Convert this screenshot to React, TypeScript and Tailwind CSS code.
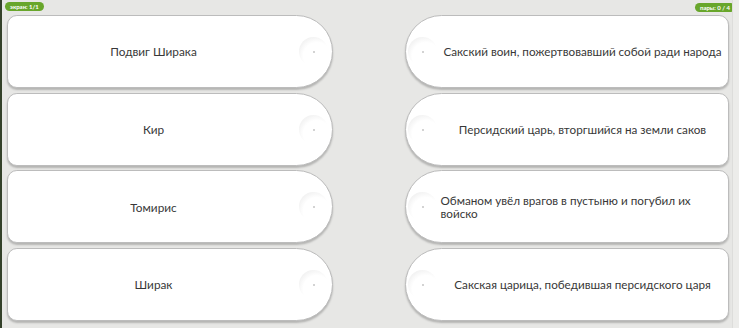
import React from "react";

const LEFT = ["Подвиг Ширака", "Кир", "Томирис", "Ширак"];
const RIGHT = [
  "Сакский воин, пожертвовавший собой ради народа",
  "Персидский царь, вторгшийся на земли саков",
  "Обманом увёл врагов в пустыню и погубил их войско",
  "Сакская царица, победившая персидского царя",
];

function Knob() {
  return (
    <div className="relative w-[29px] h-[29px] shrink-0 rounded-full bg-[radial-gradient(circle_at_62%_66%,#ffffff_52%,#f1f1f1_78%,#e2e2e2_100%)]">
      <div className="absolute left-[14px] top-[14px] w-[2px] h-[2px] rounded-full bg-[#c4c4c4]" />
    </div>
  );
}

function Badge({ text }: { text: string }) {
  return (
    <div className="h-[9px] px-[5px] rounded-full bg-[#68a62b] text-white text-[6px] leading-[9px] font-bold">
      {text}
    </div>
  );
}

export default function App() {
  return (
    <div
      className="w-[739px] h-[328px] flex bg-[#e7e7e5] overflow-hidden text-[#383838]"
      style={{ fontFamily: 'Lato, "Open Sans", sans-serif' }}
    >
      <div className="w-[2px] bg-[#34412a]" />
      <div className="flex-1 flex flex-col">
        {/* top badges */}
        <div className="flex justify-between items-start pl-[3px] pt-[2px] h-[13px]">
          <Badge text="экран: 1/1" />
          <div className="mt-[1px] -mr-[3px]">
            <Badge text="пары: 0 / 4" />
          </div>
        </div>

        <div className="flex pl-[5px] pt-[2px] gap-[72px]">
          {/* left column */}
          <div className="w-[326px] flex flex-col gap-[4.7px]">
            {LEFT.map((t) => (
              <div
                key={t}
                className="h-[73px] flex items-center bg-white border border-[#bcbcbc] rounded-l-[10px] rounded-r-[37px] shadow-[0_2px_2px_rgba(0,0,0,0.22)]"
              >
                <div className="flex-1 text-center text-[11.8px] pt-[1px]">{t}</div>
                <div className="mr-[4px]">
                  <Knob />
                </div>
              </div>
            ))}
          </div>

          {/* right column */}
          <div className="w-[324px] flex flex-col gap-[4.7px]">
            {RIGHT.map((t) => (
              <div
                key={t}
                className="h-[73px] flex items-center bg-white border border-[#bcbcbc] rounded-l-[37px] rounded-r-[10px] shadow-[0_2px_2px_rgba(0,0,0,0.22)]"
              >
                <div className="ml-[2px]">
                  <Knob />
                </div>
                <div className="flex-1 flex justify-center pl-[2px] pr-[2px]">
                  <div className="max-w-[284px] text-left text-[11.7px] leading-[13px]">{t}</div>
                </div>
              </div>
            ))}
          </div>
        </div>
      </div>
      <div className="w-[7px] bg-[#ececea] border-l border-[#dddddb]" />
    </div>
  );
}
